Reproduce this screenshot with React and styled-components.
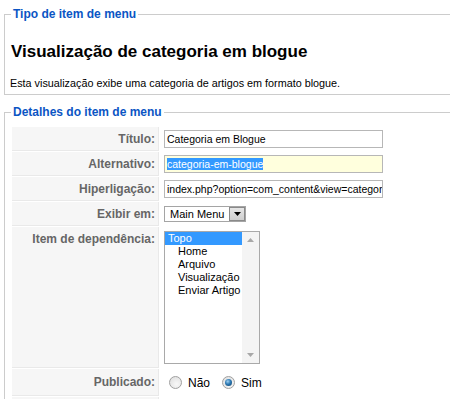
import React from "react";
import styled, { createGlobalStyle } from "styled-components";

const Global = createGlobalStyle`
  html, body { margin: 0; padding: 0; background: #fff; }
  body { font-family: "Liberation Sans", Arial, sans-serif; font-size: 11px; color: #000; overflow: hidden; }
`;

const Page = styled.div`
  width: 450px;
  height: 399px;
  overflow: hidden;
  padding: 6px 0 0 4px;
  box-sizing: border-box;
`;

const Fieldset = styled.fieldset`
  margin: ${(p) => p.$mt || 0}px -30px 0 0;
  border: 1px solid #cccccc;
  padding: 0 5px ${(p) => p.$pb || 0}px 5px;
  min-width: 0;
`;

const Legend = styled.legend`
  color: #0b55c4;
  font-size: 12px;
  line-height: 16px;
  font-weight: bold;
  padding: 0 2px;
  margin-left: 1px;
`;

const Title = styled.h1`
  margin: 20px 0 0 1px;
  font-size: 17px;
  line-height: 20px;
  font-weight: bold;
`;

const Desc = styled.p`
  margin: 14px 0 0 0;
  font-size: 10.8px;
  line-height: 14px;
`;

const Table = styled.table`
  border-collapse: separate;
  border-spacing: 1px;
  margin: 6px 0 0 1px;
`;

const Key = styled.td`
  width: 140px;
  padding: 3px;
  background: #f6f6f6;
  color: #666;
  font-weight: bold;
  font-size: 12px;
  text-align: right;
  vertical-align: ${(p) => (p.$top ? "top" : "middle")};
  border-bottom: 1px solid #e9e9e9;
  border-right: 1px solid #e9e9e9;
  height: ${(p) => p.$h || 17}px;
  line-height: 14px;
  ${(p) => (p.$top ? "padding-top: 5px;" : "")}
`;

const Val = styled.td`
  padding: 3px 3px 3px 4px;
  vertical-align: top;
`;

const TextBox = styled.div`
  box-sizing: border-box;
  width: 219px;
  height: 18px;
  border: 1px solid #b7b7b7;
  background: ${(p) => (p.$focus ? "#ffffdd" : "#fff")};
  font-size: 10.5px;
  line-height: 16px;
  padding: 0 2px;
  white-space: nowrap;
  overflow: hidden;
`;

const Selected = styled.span`
  background: #3399ff;
  color: #fff;
`;

const Select = styled.div`
  display: inline-flex;
  align-items: stretch;
  box-sizing: border-box;
  height: 16px;
  margin-top: 1px;
  border: 1px solid #a5a5a5;
  background: #fff;
  font-size: 11px;
  line-height: 14px;
`;

const SelectText = styled.span`
  padding: 0 5px 0 5px;
`;

const DropBtn = styled.span`
  width: 16px;
  box-sizing: border-box;
  border: 1px solid #8a8a8a;
  background: linear-gradient(#e6e6e6, #cfcfcf);
  display: flex;
  align-items: center;
  justify-content: center;
`;

const ListBox = styled.div`
  display: flex;
  box-sizing: border-box;
  width: 96px;
  height: 133px;
  margin-top: 1px;
  border: 1px solid #a9a9a9;
  background: #fff;
`;

const Options = styled.div`
  flex: 1;
`;

const Option = styled.div`
  font-size: 11px;
  line-height: 13px;
  height: 13px;
  white-space: nowrap;
  padding-left: ${(p) => (p.$sub ? 13 : 3)}px;
  background: ${(p) => (p.$sel ? "#3399ff" : "transparent")};
  color: ${(p) => (p.$sel ? "#fff" : "#000")};
`;

const Scroll = styled.div`
  width: 17px;
  background: #f4f4f4;
  display: flex;
  flex-direction: column;
  justify-content: space-between;
  align-items: center;
  padding: 6px 0;
  box-sizing: border-box;
`;

const RadioRow = styled.div`
  display: flex;
  align-items: center;
  height: 21px;
  font-size: 12px;
`;

const Radio = styled.span`
  width: 13px;
  height: 13px;
  box-sizing: border-box;
  border-radius: 50%;
  border: 1px solid #a0a0a0;
  background: radial-gradient(circle at 60% 65%, #f8f8f8 0%, #dcdcdc 100%);
  margin: 0 6px 0 5px;
  display: flex;
  align-items: center;
  justify-content: center;
`;

const Dot = styled.span`
  width: 7px;
  height: 7px;
  border-radius: 50%;
  background: radial-gradient(circle at 40% 35%, #9fd0f0 0%, #2b78b3 45%, #0e3d63 100%);
`;

const RadioLabel = styled.span`
  margin-right: 7px;
`;

const Arrow = ({ up }) => (
  <svg width="7" height="4" viewBox="0 0 7 4">
    <path d={up ? "M0 4 L3.5 0 L7 4 Z" : "M0 0 L3.5 4 L7 0 Z"} fill="#a8a8a8" />
  </svg>
);

export default function App() {
  return (
    <Page>
      <Global />
      <Fieldset $pb={4}>
        <Legend>Tipo de item de menu</Legend>
        <Title>Visualização de categoria em blogue</Title>
        <Desc>Esta visualização exibe uma categoria de artigos em formato blogue.</Desc>
      </Fieldset>
      <Fieldset $mt={9}>
        <Legend>Detalhes do item de menu</Legend>
        <Table>
          <tbody>
            <tr>
              <Key>Título:</Key>
              <Val><TextBox>Categoria em Blogue</TextBox></Val>
            </tr>
            <tr>
              <Key>Alternativo:</Key>
              <Val><TextBox $focus><Selected>categoria-em-blogue</Selected></TextBox></Val>
            </tr>
            <tr>
              <Key>Hiperligação:</Key>
              <Val><TextBox>index.php?option=com_content&amp;view=category&amp;layout=blog</TextBox></Val>
            </tr>
            <tr>
              <Key>Exibir em:</Key>
              <Val>
                <Select>
                  <SelectText>Main Menu</SelectText>
                  <DropBtn>
                    <svg width="7" height="4" viewBox="0 0 7 4"><path d="M0 0 L3.5 4 L7 0 Z" fill="#000" /></svg>
                  </DropBtn>
                </Select>
              </Val>
            </tr>
            <tr>
              <Key $top $h={132}>Item de dependência:</Key>
              <Val>
                <ListBox>
                  <Options>
                    <Option $sel>Topo</Option>
                    <Option $sub>Home</Option>
                    <Option $sub>Arquivo</Option>
                    <Option $sub>Visualização</Option>
                    <Option $sub>Enviar Artigo</Option>
                  </Options>
                  <Scroll>
                    <Arrow up />
                    <Arrow />
                  </Scroll>
                </ListBox>
              </Val>
            </tr>
            <tr>
              <Key>Publicado:</Key>
              <Val>
                <RadioRow>
                  <Radio />
                  <RadioLabel>Não</RadioLabel>
                  <Radio><Dot /></Radio>
                  <RadioLabel>Sim</RadioLabel>
                </RadioRow>
              </Val>
            </tr>
            <tr>
              <Key>&nbsp;</Key>
              <Val />
            </tr>
          </tbody>
        </Table>
      </Fieldset>
    </Page>
  );
}
